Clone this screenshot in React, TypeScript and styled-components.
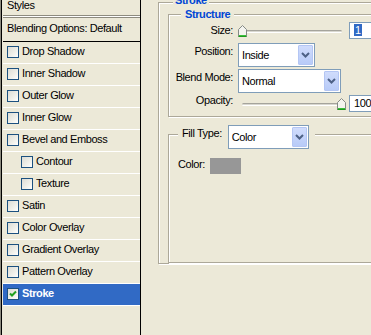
import styled, { createGlobalStyle } from "styled-components";

interface Effect {
  name: string;
  indent?: boolean;
  checked?: boolean;
  selected?: boolean;
}

const effects: Effect[] = [
  { name: "Drop Shadow" },
  { name: "Inner Shadow" },
  { name: "Outer Glow" },
  { name: "Inner Glow" },
  { name: "Bevel and Emboss" },
  { name: "Contour", indent: true },
  { name: "Texture", indent: true },
  { name: "Satin" },
  { name: "Color Overlay" },
  { name: "Gradient Overlay" },
  { name: "Pattern Overlay" },
  { name: "Stroke", checked: true, selected: true },
];

const GlobalStyle = createGlobalStyle`
  html, body {
    margin: 0;
    padding: 0;
    background: #ece9d8;
  }
  body {
    font-family: "Liberation Sans", Arial, sans-serif;
    font-size: 11px;
    letter-spacing: -0.4px;
    color: #000;
  }
`;

const Check = ({ checked }: { checked?: boolean }) => (
  <CheckBox>
    {checked && (
      <svg width="10" height="10" viewBox="0 0 10 10">
        <path d="M2 4.5L4 6.5L8 2.5" fill="none" stroke="#21a121" strokeWidth="2" />
      </svg>
    )}
  </CheckBox>
);

const Chevron = () => (
  <svg width="9" height="6" viewBox="0 0 9 6">
    <path d="M1 1L4.5 4.5L8 1" fill="none" stroke="#4d6185" strokeWidth="2" />
  </svg>
);

const Combo = ({ value, width }: { value: string; width: number }) => (
  <ComboBox $width={width}>
    <ComboText>{value}</ComboText>
    <DropButton>
      <Chevron />
    </DropButton>
  </ComboBox>
);

const Slider = ({ value }: { value: number }) => (
  <SliderBox>
    <Groove />
    <Thumb style={{ left: `${(value / 100) * 99}px` }}>
      <svg width="9" height="12" viewBox="0 0 9 12">
        <path d="M0.5 11.5V4.5L4.5 0.5L8.5 4.5V11.5Z" fill="#f4f4ef" stroke="#858a86" />
        <path d="M1 10.5H8" stroke="#3cbf3c" />
        <path d="M0.5 11.5H8.5" stroke="#1f9a1f" />
      </svg>
    </Thumb>
  </SliderBox>
);

const App = () => {
  return (
    <Screen>
      <GlobalStyle />
      <StyleList>
        <ListHeader>Styles</ListHeader>
        <HeaderRule />
        <Blending>Blending Options: Default</Blending>
        {effects.map((effect) => (
          <EffectRow
            key={effect.name}
            $indent={effect.indent}
            $selected={effect.selected}
          >
            <Check checked={effect.checked} />
            {effect.name}
          </EffectRow>
        ))}
      </StyleList>

      <StrokeGroup>
        <Legend $indent={5} $pad={2} $drop={4}>
          Stroke
        </Legend>
        <StructureGroup>
          <Legend $indent={12} $pad={4}>
            Structure
          </Legend>
          <Form>
            <Label>Size:</Label>
            <ControlRow>
              <Slider value={0} />
              <TextBox>
                <Selection>1</Selection>
              </TextBox>
            </ControlRow>

            <Label $lift={7}>Position:</Label>
            <ControlRow>
              <Combo value="Inside" width={77} />
            </ControlRow>

            <Label $lift={7}>Blend Mode:</Label>
            <ControlRow>
              <Combo value="Normal" width={103} />
            </ControlRow>

            <Label $lift={5}>Opacity:</Label>
            <ControlRow>
              <Slider value={100} />
              <TextBox>100</TextBox>
            </ControlRow>
          </Form>
        </StructureGroup>

        <FillGroup>
          <FillLegend>
            <FillCaption>
              <FillLabel>Fill Type:</FillLabel>
              <Combo value="Color" width={81} />
            </FillCaption>
          </FillLegend>
          <ColorRow>
            <span>Color:</span>
            <Swatch $color="#979797" />
          </ColorRow>
        </FillGroup>
      </StrokeGroup>
    </Screen>
  );
};

export default App;

const Screen = styled.div`
  display: flex;
  align-items: flex-start;
  width: 371px;
  height: 335px;
  overflow: hidden;
  background: #ece9d8;
`;

const StyleList = styled.div`
  flex: none;
  box-sizing: border-box;
  width: 141px;
  height: 100%;
  padding-left: 2px;
  border-left: 1px solid #8d8b7f;
  border-right: 1px solid #000;
  box-shadow: inset 1px 0 0 #000;
`;

const ListHeader = styled.div`
  height: 15px;
  padding-left: 4px;
  line-height: 10px;
`;

const HeaderRule = styled.div`
  height: 1px;
  background: #fff;
  border-top: 1px solid #8d8b7f;
  border-bottom: 1px solid #8d8b7f;
`;

const Blending = styled.div`
  height: 23px;
  padding-left: 4px;
  line-height: 21px;
  border-bottom: 1px solid #000;
`;

const EffectRow = styled.div<{ $indent?: boolean; $selected?: boolean }>`
  display: flex;
  align-items: center;
  gap: 3px;
  box-sizing: border-box;
  height: 22px;
  padding: 0 0 2px ${(p) => (p.$indent ? 18 : 4)}px;
  line-height: 19px;
  border-bottom: 1px solid #fff;
  background: ${(p) => (p.$selected ? "#316ac5" : "transparent")};
  color: ${(p) => (p.$selected ? "#fff" : "#000")};
  font-weight: ${(p) => (p.$selected ? "bold" : "normal")};
`;

const CheckBox = styled.span`
  flex: none;
  display: flex;
  align-items: center;
  justify-content: center;
  box-sizing: border-box;
  width: 12px;
  height: 12px;
  border: 1px solid #1c5180;
  background: linear-gradient(135deg, #dcdcd5 0%, #f0f0ea 60%, #fff 100%);
`;

const StrokeGroup = styled.fieldset`
  flex: none;
  width: 260px;
  min-width: 0;
  margin: -4px 0 0 17px;
  padding: 2px 9px 0 9px;
  border: 1px solid #aca899;
  box-shadow: 1px 1px 0 #fff, inset 1px 1px 0 #fff;
`;

const Legend = styled.legend<{ $indent: number; $pad: number; $drop?: number }>`
  margin-left: ${(p) => p.$indent}px;
  padding: 0 ${(p) => p.$pad}px ${(p) => p.$drop ?? 0}px;
  line-height: 8px;
  font-weight: bold;
  color: #0046d5;
  background: #ece9d8;
`;

const StructureGroup = styled.fieldset`
  min-width: 0;
  margin: 0;
  padding: 0 0 4px 0;
  border: 1px solid #aca899;
  box-shadow: 1px 1px 0 #fff, inset 1px 1px 0 #fff;
`;

const Form = styled.div`
  display: grid;
  grid-template-columns: 64px auto;
  grid-template-rows: 24px 26px 26px 18px;
  column-gap: 5px;
  align-items: center;
`;

const Label = styled.span<{ $lift?: number }>`
  text-align: right;
  line-height: 13px;
  padding-bottom: ${(p) => p.$lift ?? 0}px;
  white-space: nowrap;
`;

const ControlRow = styled.div`
  display: flex;
  align-items: center;
  gap: 3px;
`;

const SliderBox = styled.div`
  position: relative;
  flex: none;
  width: 108px;
  height: 12px;
`;

const Groove = styled.div`
  height: 1px;
  margin: 6px 4px 0;
  border-top: 1px solid #a5a49c;
  border-bottom: 1px solid #fff;
  border-radius: 2px;
  background: #d8d7cf;
`;

const Thumb = styled.div`
  position: absolute;
  top: 1px;
  width: 9px;
  height: 12px;
  line-height: 0;
`;

const TextBox = styled.div`
  flex: none;
  box-sizing: border-box;
  width: 40px;
  height: 17px;
  padding-left: 4px;
  border: 1px solid #7f9db9;
  background: #fff;
  line-height: 15px;
`;

const Selection = styled.span`
  display: inline-block;
  padding: 0 1px;
  line-height: 12px;
  background: #316ac5;
  color: #fff;
`;

const ComboBox = styled.div<{ $width: number }>`
  flex: none;
  display: flex;
  align-items: center;
  box-sizing: border-box;
  width: ${(p) => p.$width}px;
  height: 24px;
  padding: 0 1px 0 3px;
  border: 1px solid #7f9db9;
  background: #fff;
  line-height: 13px;
`;

const ComboText = styled.span`
  flex: 1;
`;

const DropButton = styled.div`
  display: flex;
  align-items: center;
  justify-content: center;
  box-sizing: border-box;
  width: 15px;
  height: 20px;
  border: 1px solid #b4c6f4;
  border-radius: 1px;
  background: linear-gradient(#d0dcfc, #b8cbf8);
`;

const FillGroup = styled.fieldset`
  min-width: 0;
  margin: 2px 0 0;
  padding: 9px 0 88px 9px;
  border: 1px solid #aca899;
  box-shadow: 1px 1px 0 #fff, inset 1px 1px 0 #fff;
`;

const FillLegend = styled.legend`
  margin-left: 0;
  padding: 6px 6px 0 4px;
  background: #ece9d8;
`;

const FillCaption = styled.div`
  display: flex;
  align-items: flex-start;
  gap: 6px;
`;

const FillLabel = styled.span`
  padding-top: 2px;
  line-height: 13px;
`;

const ColorRow = styled.div`
  display: flex;
  align-items: flex-start;
  gap: 5px;
  line-height: 13px;
`;

const Swatch = styled.div<{ $color: string }>`
  width: 31px;
  height: 16px;
  background: ${(p) => p.$color};
`;
